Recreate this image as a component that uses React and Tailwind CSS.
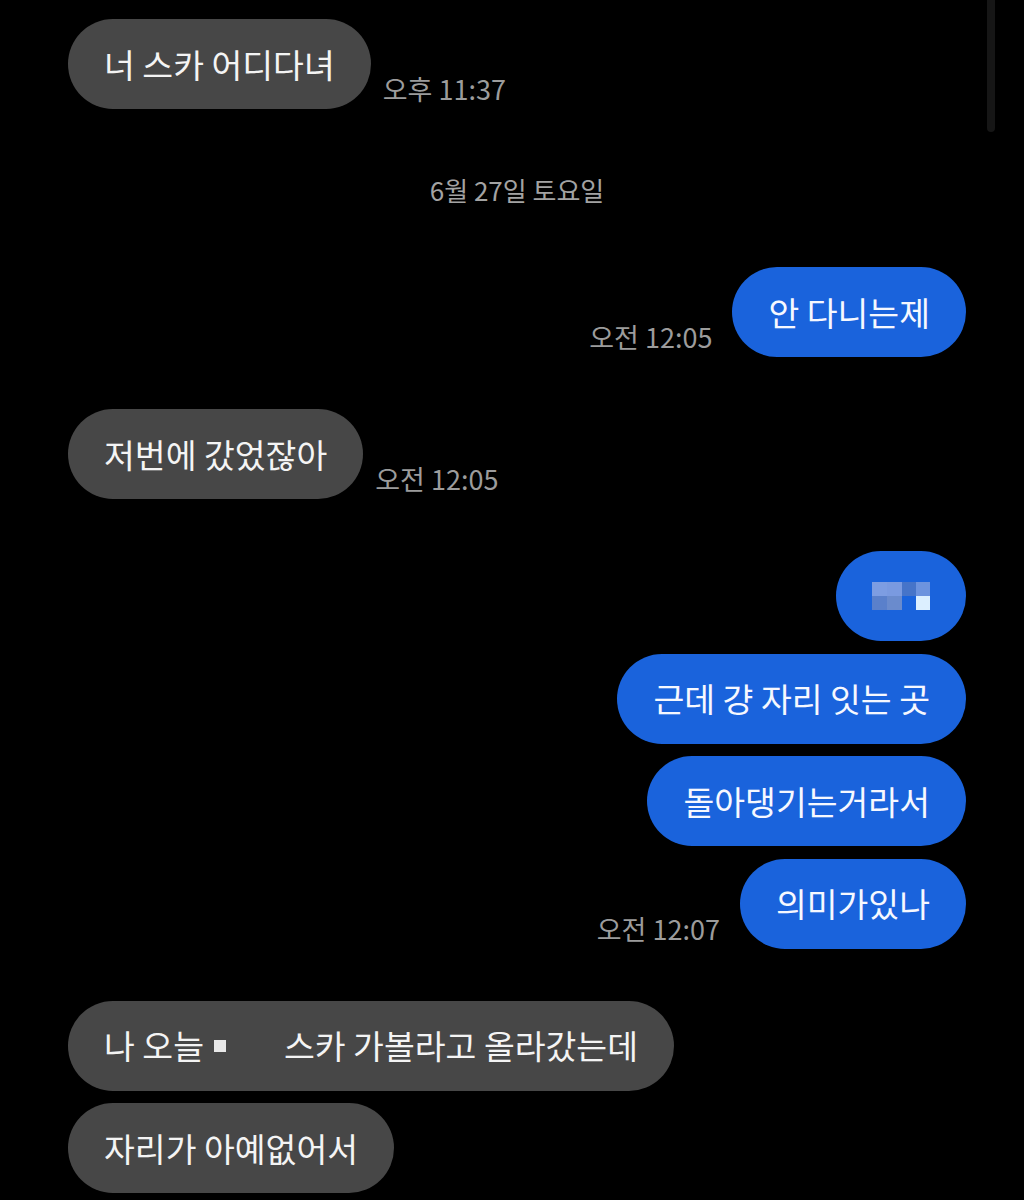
const FONT = { fontFamily: '"Noto Sans CJK KR", "Noto Sans", sans-serif' };

function Time({ children }) {
    return (
        <span className="mb-[4px] text-[27px] leading-[32px] text-[#9c9c9c] whitespace-nowrap">
            {children}
        </span>
    );
}

function Received({ children, time }) {
    return (
        <div className="flex items-end gap-3">
            <div className="h-[90px] flex items-center px-9 rounded-full bg-[#474747] text-[33.5px] text-[#f4f4f4] whitespace-nowrap">
                {children}
            </div>
            {time && <Time>{time}</Time>}
        </div>
    );
}

function Sent({ children, time }) {
    return (
        <div className="flex items-end justify-end gap-5">
            {time && <Time>{time}</Time>}
            <div className="h-[90px] flex items-center px-9 rounded-full bg-[#1a63dc] text-[33.5px] text-[#f6f8ff] whitespace-nowrap">
                {children}
            </div>
        </div>
    );
}

function Pixelated() {
    // mosaic of a hidden word
    return (
        <div className="grid grid-cols-[15px_15px_14px_14px] grid-rows-[14px_14px]">
            <div className="bg-[#7d9de2]" />
            <div className="bg-[#7a9ae0]" />
            <div className="bg-[#4674c9]" />
            <div className="bg-[#6d93de]" />
            <div className="bg-[#5a80cb]" />
            <div className="bg-[#6a8bcd]" />
            <div className="bg-[#1a63dc]" />
            <div className="bg-[#dcefff]" />
        </div>
    );
}

export default function App() {
    return (
        <div className="relative w-[1024px] h-[1200px] overflow-hidden bg-black" style={FONT}>
            <div className="absolute right-[29px] top-0 w-2 h-[132px] rounded-b-full bg-[#161616]" />

            <div className="pl-[68px] pr-[58px] pt-[19px]">
                <Received time="오후 11:37">너 스카 어디다녀</Received>

                <div className="mt-[64px] mb-[60px] text-center text-[26px] leading-[34px] text-[#a3a3a3]">
                    6월 27일 토요일
                </div>

                <Sent time="오전 12:05">안 다니는제</Sent>

                <div className="mt-[52px]">
                    <Received time="오전 12:05">저번에 갔었잖아</Received>
                </div>

                <div className="mt-[52px] flex flex-col gap-[12.5px]">
                    <Sent>
                        <Pixelated />
                    </Sent>
                    <Sent>근데 걍 자리 잇는 곳</Sent>
                    <Sent>돌아댕기는거라서</Sent>
                    <Sent time="오전 12:07">의미가있나</Sent>
                </div>

                <div className="mt-[52px] flex flex-col gap-[12.5px]">
                    <Received>
                        나 오늘
                        <span className="inline-block w-3 h-3 mx-[10px] bg-[#e8e8e8]" />
                        <span className="inline-block w-[48px]" />
                        스카 가볼라고 올라갔는데
                    </Received>
                    <Received>자리가 아예없어서</Received>
                </div>
            </div>
        </div>
    );
}
